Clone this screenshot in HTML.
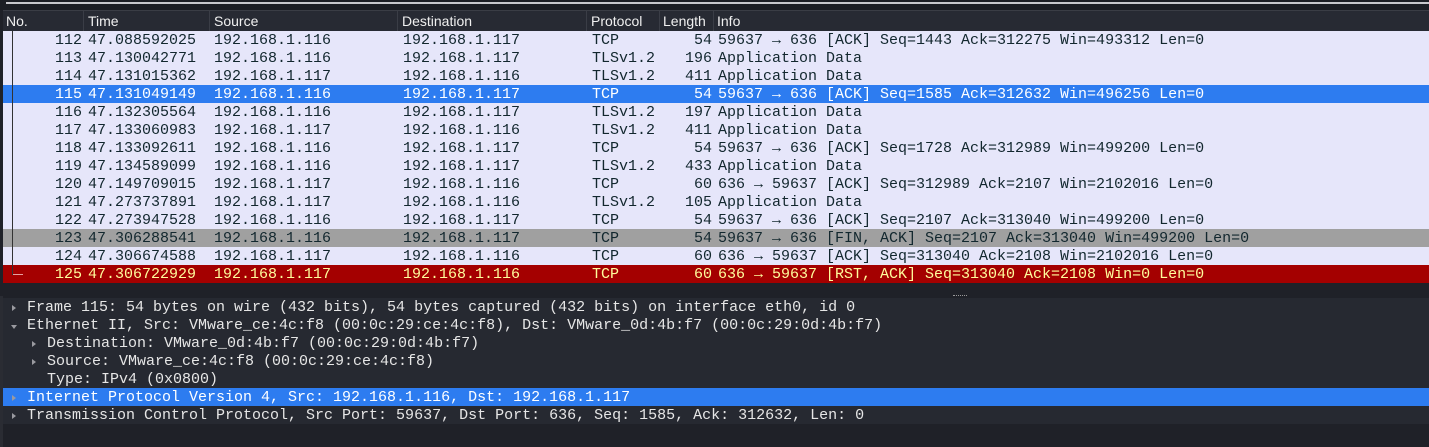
<!DOCTYPE html>
<html><head><meta charset="utf-8"><style>
body{margin:0;width:1429px;height:447px;background:#1f2128;overflow:hidden;position:relative;font-family:"Liberation Mono",monospace;font-size:15px}
.top{position:absolute;left:0;top:0;width:1429px;height:10px;background:#1c1e24}
.top i{position:absolute;left:6px;top:2px;right:0;height:2px;background:#c8c8cc}
.hdr{position:absolute;left:3px;top:10px;width:1426px;height:21px;background:#272a33;border-top:1px solid #3a3d45;font-family:"Liberation Sans",sans-serif;font-size:14px;color:#f0f0f0}
.hdr span{position:absolute;top:2px}
.hdr b{position:absolute;top:0;width:1px;height:21px;background:#3a3d46}
.row{position:absolute;left:3px;width:1426px;height:18px;line-height:18px;background:#e6e6fa;color:#12272e;white-space:pre}
.row span{position:absolute;top:1px}
.sel{background:#2d7cf0;color:#fff}
.gry{background:#a0a0a0;color:#12272e}
.red{background:#a40000;color:#fffc9c}
.det{position:absolute;left:3px;width:1426px;height:18px;line-height:18px;color:#e6e6e6;white-space:pre;background:#262931}
.det span{position:absolute;top:1px}
.dsel{background:#2d7cf0;color:#fff}
.tri{position:absolute;top:7px;width:0;height:0;border-top:3px solid transparent;border-bottom:3px solid transparent;border-left:4px solid #9a9aa0}
.trd{position:absolute;top:9px;width:0;height:0;border-left:3px solid transparent;border-right:3px solid transparent;border-top:4px solid #9a9aa0}
</style></head><body>
<div class="top"><i></i></div>
<div class="hdr">
<span style="left:3px">No.</span><b style="left:80px"></b>
<span style="left:85px">Time</span><b style="left:206px"></b>
<span style="left:211px">Source</span><b style="left:394px"></b>
<span style="left:399px">Destination</span><b style="left:583px"></b>
<span style="left:588px">Protocol</span><b style="left:656px"></b>
<span style="left:660px">Length</span><b style="left:710px"></b>
<span style="left:714px">Info</span>
</div>
<div id="rows"></div>
<div style="position:absolute;left:12px;top:31px;width:1px;height:244px;background:#333"></div>
<div style="position:absolute;left:13px;top:274px;width:10px;height:1px;background:#e8a0a0"></div>
<div style="position:absolute;left:3px;top:283px;width:1426px;height:12px;background:#1f2128"></div>
<div style="position:absolute;left:953px;top:295px;width:14px;height:1px;border-top:1px dotted #999"></div>
<div id="dets"></div>
<script>
var R=[
[112,"47.088592025","192.168.1.116","192.168.1.117","TCP","54","59637 → 636 [ACK] Seq=1443 Ack=312275 Win=493312 Len=0",""],
[113,"47.130042771","192.168.1.116","192.168.1.117","TLSv1.2","196","Application Data",""],
[114,"47.131015362","192.168.1.117","192.168.1.116","TLSv1.2","411","Application Data",""],
[115,"47.131049149","192.168.1.116","192.168.1.117","TCP","54","59637 → 636 [ACK] Seq=1585 Ack=312632 Win=496256 Len=0","sel"],
[116,"47.132305564","192.168.1.116","192.168.1.117","TLSv1.2","197","Application Data",""],
[117,"47.133060983","192.168.1.117","192.168.1.116","TLSv1.2","411","Application Data",""],
[118,"47.133092611","192.168.1.116","192.168.1.117","TCP","54","59637 → 636 [ACK] Seq=1728 Ack=312989 Win=499200 Len=0",""],
[119,"47.134589099","192.168.1.116","192.168.1.117","TLSv1.2","433","Application Data",""],
[120,"47.149709015","192.168.1.117","192.168.1.116","TCP","60","636 → 59637 [ACK] Seq=312989 Ack=2107 Win=2102016 Len=0",""],
[121,"47.273737891","192.168.1.117","192.168.1.116","TLSv1.2","105","Application Data",""],
[122,"47.273947528","192.168.1.116","192.168.1.117","TCP","54","59637 → 636 [ACK] Seq=2107 Ack=313040 Win=499200 Len=0",""],
[123,"47.306288541","192.168.1.116","192.168.1.117","TCP","54","59637 → 636 [FIN, ACK] Seq=2107 Ack=313040 Win=499200 Len=0","gry"],
[124,"47.306674588","192.168.1.117","192.168.1.116","TCP","60","636 → 59637 [ACK] Seq=313040 Ack=2108 Win=2102016 Len=0",""],
[125,"47.306722929","192.168.1.117","192.168.1.116","TCP","60","636 → 59637 [RST, ACK] Seq=313040 Ack=2108 Win=0 Len=0","red"]];
var h="";R.forEach(function(r,i){h+='<div class="row '+r[7]+'" style="top:'+(31+i*18)+'px"><span style="right:1347px">'+r[0]+'</span><span style="left:85px">'+r[1]+'</span><span style="left:211px">'+r[2]+'</span><span style="left:400px">'+r[3]+'</span><span style="left:589px">'+r[4]+'</span><span style="right:717px">'+r[5]+'</span><span style="left:715px">'+r[6]+'</span></div>';});
document.getElementById("rows").innerHTML=h;
var D=[[24,"Frame 115: 54 bytes on wire (432 bits), 54 bytes captured (432 bits) on interface eth0, id 0","r",""],
[24,"Ethernet II, Src: VMware_ce:4c:f8 (00:0c:29:ce:4c:f8), Dst: VMware_0d:4b:f7 (00:0c:29:0d:4b:f7)","d",""],
[44,"Destination: VMware_0d:4b:f7 (00:0c:29:0d:4b:f7)","r",""],
[44,"Source: VMware_ce:4c:f8 (00:0c:29:ce:4c:f8)","r",""],
[44,"Type: IPv4 (0x0800)","",""],
[24,"Internet Protocol Version 4, Src: 192.168.1.116, Dst: 192.168.1.117","r","dsel"],
[24,"Transmission Control Protocol, Src Port: 59637, Dst Port: 636, Seq: 1585, Ack: 312632, Len: 0","r",""]];
h="";D.forEach(function(d,i){var ic=d[2]=="r"?'<i class="tri" style="left:'+(d[0]-15)+'px"></i>':d[2]=="d"?'<i class="trd" style="left:'+(d[0]-16)+'px"></i>':'';
h+='<div class="det '+d[3]+'" style="top:'+(298+i*18)+'px">'+ic+'<span style="left:'+d[0]+'px">'+d[1]+'</span></div>';});
document.getElementById("dets").innerHTML=h;
</script>
<div style="position:absolute;left:3px;top:424px;width:1426px;height:23px;background:#1f2128"></div>
<div style="position:absolute;left:0;top:296px;width:3px;height:151px;background:#2a2c33"></div>
</body></html>
